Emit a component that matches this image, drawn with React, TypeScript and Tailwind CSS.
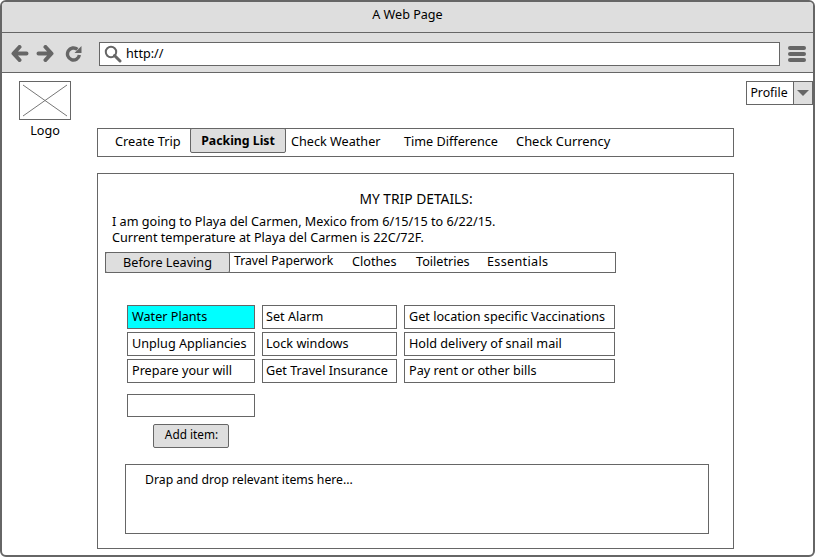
const font = "font-['Noto_Sans',sans-serif]";

const navItems = [
  { label: "Create Trip", className: "w-[92px] pl-[17px] text-[12.8px]" },
  { label: "Packing List", className: "w-[96px] justify-center text-[12.3px]", active: true },
  { label: "Check Weather", className: "w-[112px] pl-[5px]" },
  { label: "Time Difference", className: "w-[112px] pl-[6px]" },
  { label: "Check Currency", className: "w-[110px] pl-[6px] text-[12.9px]" },
];

const tabs = [
  { label: "Travel Paperwork", className: "w-[122px] pl-[4px] text-[12.2px]" },
  { label: "Clothes", className: "w-[64px]" },
  { label: "Toiletries", className: "w-[71px]" },
  { label: "Essentials", className: "w-[80px] tracking-[0.3px]" },
];

const items = [
  ["Water Plants", "Set Alarm", "Get location specific Vaccinations"],
  ["Unplug Appliancies", "Lock windows", "Hold delivery of snail mail"],
  ["Prepare your will", "Get Travel Insurance", "Pay rent or other bills"],
];

const colWidths = ["w-[128px] pl-[4px]", "w-[135px] pl-[3px]", "w-[211px] pl-[4px]"];

function ItemBox({ label, col }: { label: string; col: number }) {
  const highlighted = label === "Water Plants";
  return (
    <div
      className={`flex h-[24px] items-center border border-[#666] pb-[2px] text-black ${colWidths[col]} ${
        highlighted ? "bg-[#00ffff]" : "bg-white"
      }`}
    >
      {label}
    </div>
  );
}

function NavIcons() {
  return (
    <>
      <svg width="18" height="17" viewBox="0 0 18 17" className="text-[#666]">
        <path d="M8.5 2 L2.5 8.5 L8.5 15 M3 8.5 H15.5" fill="none" stroke="currentColor" strokeWidth="4" strokeLinecap="round" strokeLinejoin="round" />
      </svg>
      <svg width="18" height="17" viewBox="0 0 18 17" className="ml-[7px] text-[#666]">
        <path d="M9.5 2 L15.5 8.5 L9.5 15 M15 8.5 H2.5" fill="none" stroke="currentColor" strokeWidth="4" strokeLinecap="round" strokeLinejoin="round" />
      </svg>
      <svg width="17" height="17" viewBox="0 0 17 17" className="ml-[11px] text-[#666]">
        <path d="M12.4 4.4 A6 6 0 1 0 14.4 10" fill="none" stroke="currentColor" strokeWidth="3.4" />
        <path d="M9.5 8 L16.5 8 L16.5 1 Z" fill="currentColor" />
      </svg>
    </>
  );
}

export default function App() {
  return (
    <div className={`h-[557px] w-[815px] overflow-hidden rounded-[6px] border-2 border-[#666] bg-white text-[12.65px] text-black ${font}`}>
      <div className="flex h-[31px] items-center justify-center border-b border-[#666] bg-[#dedede] pb-[4px] text-[12.6px]">
        A Web Page
      </div>
      <div className="flex h-[40px] items-center border-b border-[#666] bg-[#dedede] pl-[9px] pt-[2px]">
        <NavIcons />
        <div className="ml-[17px] flex h-[24px] w-[681px] items-center border border-[#666] bg-white pl-[4px]">
          <svg width="18" height="18" viewBox="0 0 18 18" className="text-[#666]">
            <circle cx="7" cy="7" r="5.2" fill="none" stroke="currentColor" strokeWidth="2" />
            <path d="M10.5 10.5 L16 16" stroke="currentColor" strokeWidth="3" strokeLinecap="round" />
          </svg>
          <span className="ml-[4px]">http://</span>
        </div>
        <div className="ml-[8px] flex w-[18px] flex-col gap-[2px]">
          <div className="h-[4px] rounded-full bg-[#666]" />
          <div className="h-[4px] rounded-full bg-[#666]" />
          <div className="h-[4px] rounded-full bg-[#666]" />
        </div>
      </div>

      <div className="flex h-[55px] items-start justify-between pl-[17px] pt-[8px]">
        <div className="flex w-[52px] flex-col items-center">
          <svg width="52" height="39" viewBox="0 0 52 39" className="block">
            <rect x="0.5" y="0.5" width="51" height="38" fill="white" stroke="#666" />
            <path d="M4 4 L48 35 M48 4 L4 35" stroke="#777" fill="none" />
          </svg>
          <span className="mt-[1px]">Logo</span>
        </div>
        <div className="flex h-[24px] w-[67px] border border-[#666]">
          <div className="flex flex-1 items-center justify-center pr-[2px] text-[12.3px]">Profile</div>
          <div className="flex w-[19px] items-center justify-center border-l border-[#666] bg-[#dedede]">
            <div className="h-0 w-0 border-x-[6px] border-t-[6px] border-x-transparent border-t-[#666]" />
          </div>
        </div>
      </div>

      <div className="ml-[95px] flex h-[29px] w-[637px] items-center border border-[#666]">
        {navItems.map((item) =>
          item.active ? (
            <div
              key={item.label}
              className={`flex h-[25px] -translate-y-[2px] items-center rounded-[2px] border border-[#666] bg-[#dedede] pt-[2px] font-bold ${item.className}`}
            >
              {item.label}
            </div>
          ) : (
            <div key={item.label} className={`flex items-center pb-[2px] ${item.className}`}>
              {item.label}
            </div>
          )
        )}
      </div>

      <div className="ml-[95px] mt-[16px] h-[376px] w-[637px] border border-[#666] pl-[7px] pt-[16px]">
        <div className="w-[622px] text-center text-[13.8px] leading-[18px]">MY TRIP DETAILS:</div>
        <div className="ml-[7px] mt-[5px] leading-[16px]">
          <p>I am going to Playa del Carmen, Mexico from 6/15/15 to 6/22/15.</p>
          <p>Current temperature at Playa del Carmen is 22C/72F.</p>
        </div>

        <div className="mt-[7px] flex h-[21px] w-[511px] items-center border border-[#666]">
          <div className="-ml-[1px] flex h-[21px] w-[125px] items-center justify-center rounded-[2px] border border-[#666] bg-[#dedede]">
            Before Leaving
          </div>
          {tabs.map((tab) => (
            <div key={tab.label} className={`pb-[3px] ${tab.className}`}>
              {tab.label}
            </div>
          ))}
        </div>

        <div className="ml-[22px] mt-[32px] flex flex-col gap-[3px]">
          {items.map((row) => (
            <div key={row[0]} className="flex gap-[7px]">
              {row.map((label, col) => (
                <ItemBox key={label} label={label} col={col} />
              ))}
            </div>
          ))}
        </div>

        <div className="ml-[22px] mt-[11px] h-[23px] w-[128px] border border-[#666]" />
        <div className="ml-[48px] mt-[7px] flex h-[24px] w-[76px] items-center justify-center rounded-[2px] border border-[#666] bg-[#dedede] pb-[2px] pl-[1px] text-[11.8px]">
          Add item:
        </div>

        <div className="ml-[20px] mt-[16px] h-[70px] w-[584px] border border-[#666] pl-[19px] pt-[6px] text-[12.25px]">
          Drap and drop relevant items here...
        </div>
      </div>
    </div>
  );
}
